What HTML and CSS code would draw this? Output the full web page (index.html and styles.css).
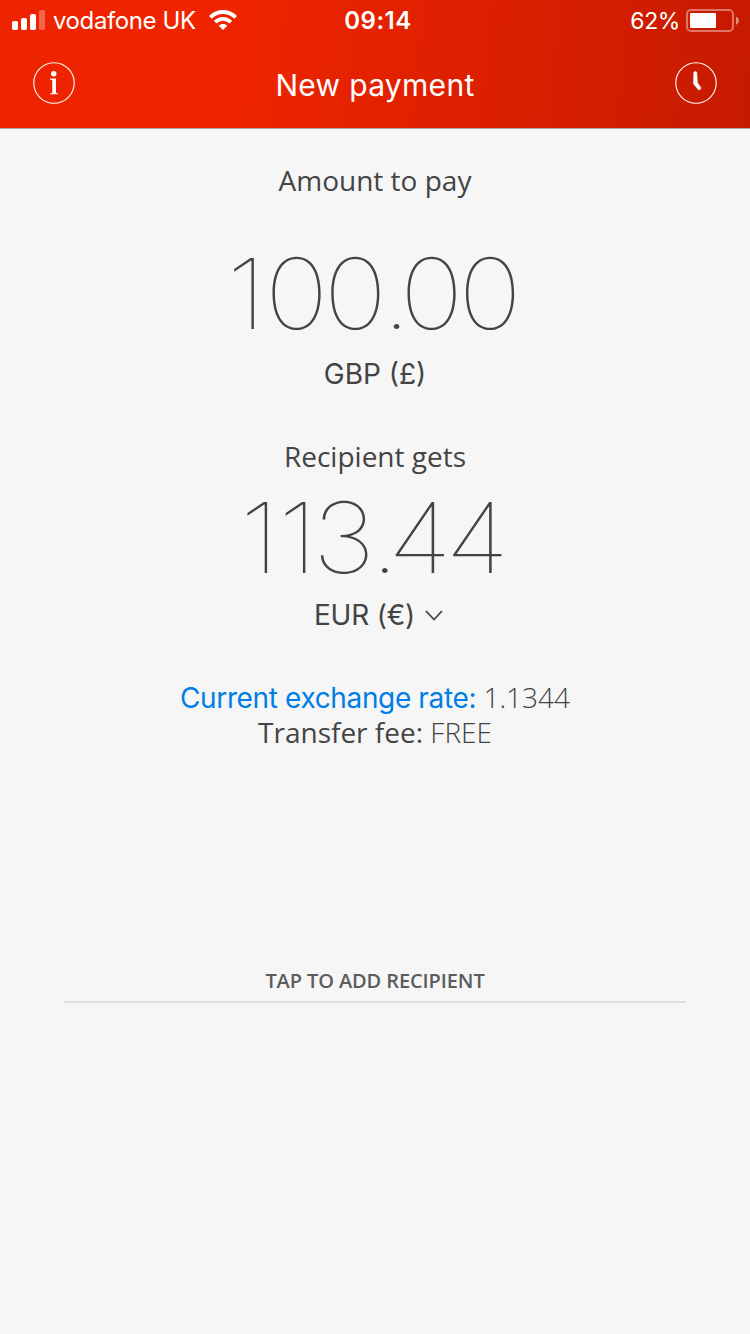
FILE: index.html
```html
<!DOCTYPE html>
<html lang="en">
<head>
    <meta charset="UTF-8" />
    <meta name="viewport" content="width=device-width, initial-scale=1" />
    <title>New payment</title>
    <link rel="stylesheet" href="styles.css">
</head>
<body>
    <header class="header">
        <!-- Status bar -->
        <div class="status-bar">
            <div class="status-left">
                <svg class="signal" width="34" height="20" viewBox="0 0 34 20" fill="#fff">
                    <rect x="0" y="11" width="6" height="9" rx="1.8" />
                    <rect x="9" y="8" width="6" height="12" rx="1.8" />
                    <rect x="18" y="4" width="6" height="16" rx="1.8" />
                    <rect x="27" y="0" width="6" height="20" rx="1.8" opacity="0.3" />
                </svg>
                <span class="carrier">vodafone UK</span>
                <svg class="wifi" width="28" height="20" viewBox="0 0 28 20" fill="none" stroke="#fff" stroke-width="3.8">
                    <path d="M1.3 7.4C8.5.2 19.5.2 26.7 7.4" />
                    <path d="M6.2 12.2C10.6 7.8 17.4 7.8 21.8 12.2" />
                    <path d="M14 20L9.7 15.7C12.1 13.3 15.9 13.3 18.3 15.7Z" fill="#fff" stroke="none" />
                </svg>
            </div>
            <span class="time">09:14</span>
            <div class="status-right">
                <span class="percent">62%</span>
                <svg class="battery" width="53" height="24" viewBox="0 0 53 24">
                    <rect x="1" y="1" width="46" height="21" rx="4" fill="none" stroke="#fff" stroke-width="2" opacity="0.4" />
                    <rect x="4" y="4" width="26" height="15" rx="1.2" fill="#fff" />
                    <path d="M50 7.5Q53 9 53 11.5T50 16Z" fill="#fff" opacity="0.5" />
                </svg>
            </div>
        </div>

        <!-- Navigation bar -->
        <nav class="nav-bar">
            <svg class="nav-icon" width="42" height="42" viewBox="0 0 42 42">
                <circle cx="21" cy="21" r="20.2" fill="none" stroke="#fff" stroke-width="1.1" />
                <circle cx="20.8" cy="11.8" r="2.7" fill="#fff" />
                <path d="M17 16.5H23V31L25 31.5V32.3H17V31.5L19.3 31V18L17 17.5Z" fill="#fff" />
            </svg>
            <h1 class="title">New payment</h1>
            <svg class="nav-icon" width="42" height="42" viewBox="0 0 42 42">
                <circle cx="21" cy="21" r="20.2" fill="none" stroke="#fff" stroke-width="1.1" />
                <path d="M20.2 9.2L18.8 10.2L18.4 21.8L23.6 28L25.8 27V25.4L22.4 20.6L21.8 10.2Z" fill="#fff" stroke="#fff" stroke-width="0.5" stroke-linejoin="round" />
            </svg>
        </nav>
    </header>

    <main class="payment">
        <section class="amount-box">
            <h2 class="label label-pay">Amount to pay</h2>
            <div class="amount amount-pay"><span class="one">1</span>00<span class="point">.</span>00</div>
            <div class="currency currency-gbp">GBP (£)</div>
        </section>

        <section class="recipient-box">
            <h2 class="label label-gets">Recipient gets</h2>
            <div class="amount amount-gets"><span class="one">1</span>13<span class="point">.</span><span class="four">4</span>4</div>
            <div class="currency currency-eur">
                <span>EUR (€)</span>
                <svg width="18" height="11" viewBox="0 0 18 11" fill="none" stroke="#444" stroke-width="1.8">
                    <path d="M1 1L9 9.5L17 1" />
                </svg>
            </div>
        </section>

        <section class="rates">
            <p class="rate"><a class="rate-link">Current exchange rate:</a> <span class="value">1.1344</span></p>
            <p class="fee">Transfer fee: <span class="value">FREE</span></p>
        </section>

        <div class="add-recipient">TAP TO ADD RECIPIENT</div>
    </main>
</body>
</html>
```
FILE: styles.css
```css
* {
    margin: 0;
    padding: 0;
    box-sizing: border-box;
}
body {
    font-family: 'Open Sans', 'Noto Sans', sans-serif;
    background-color: #f6f6f6;
    color: #444;
    min-height: 100vh;
}
.header {
    height: 129px;
    background: linear-gradient(96deg, #ee2400 33%, #c61a00 100%);
    border-bottom: 1px solid #aaa;
    color: #fff;
    font-family: Inter, sans-serif;
}
/* Status bar */
.status-bar {
    display: grid;
    grid-template-columns: 1fr auto 1fr;
    align-items: center;
    height: 40px;
    padding: 0 11px 0 12px;
}
.status-left,
.status-right {
    display: flex;
    align-items: center;
}
.status-right {
    justify-content: flex-end;
}
.carrier {
    margin-left: 7px;
    padding-top: 1px;
    font-size: 24px;
    letter-spacing: -0.4px;
}
.wifi {
    margin-left: 13px;
}
.time {
    padding: 1px 0 0 5px;
    font-size: 24px;
    font-weight: 600;
    letter-spacing: 0.5px;
}
.percent {
    padding-top: 2px;
    font-size: 23px;
    letter-spacing: -0.4px;
}
.battery {
    margin: 1px 0 0 6px;
}
/* Navigation bar */
.nav-bar {
    display: flex;
    justify-content: space-between;
    align-items: center;
    height: 86px;
    padding: 0 33px;
}
.title {
    font-size: 30px;
    font-weight: 400;
    line-height: 36px;
    letter-spacing: 0.3px;
    padding-top: 4px;
}
/* Payment */
.payment {
    text-align: center;
}
.label {
    font-size: 28px;
    font-weight: 400;
    line-height: 38px;
}
.amount-box {
    padding-top: 32px;
}
.amount {
    width: fit-content;
    margin: 0 auto;
    padding-right: 5px;
    font-family: Inter, sans-serif;
    font-size: 98px;
    font-weight: 100;
    line-height: 100px;
    letter-spacing: -4.6px;
    transform: scaleX(1.1);
}
.one {
    letter-spacing: -1.2px;
}
.point {
    letter-spacing: -10.5px;
}
.four {
    letter-spacing: -6px;
}
.amount-pay {
    margin-top: 45px;
}
.currency {
    font-family: Inter, sans-serif;
    font-size: 28px;
    line-height: 38px;
}
.currency-gbp {
    margin-top: 11px;
}
.recipient-box {
    padding-top: 44px;
}
.amount-gets {
    margin-top: 13px;
}
.currency-eur {
    display: flex;
    justify-content: center;
    align-items: center;
    gap: 10px;
    margin-top: 8px;
    padding-left: 7px;
    letter-spacing: -0.2px;
}
.rates {
    margin-top: 46px;
    font-size: 28px;
    line-height: 34px;
}
.rate-link {
    color: #007ee5;
    font-family: Inter, sans-serif;
    letter-spacing: -0.36px;
}
.value {
    font-weight: 300;
}
.add-recipient {
    margin: 218px 64px 0;
    padding-bottom: 6px;
    border-bottom: 2px solid #e0e0e0;
    color: #5c5c5c;
    font-size: 20px;
    font-weight: 600;
    line-height: 28px;
    letter-spacing: -0.1px;
}
```
